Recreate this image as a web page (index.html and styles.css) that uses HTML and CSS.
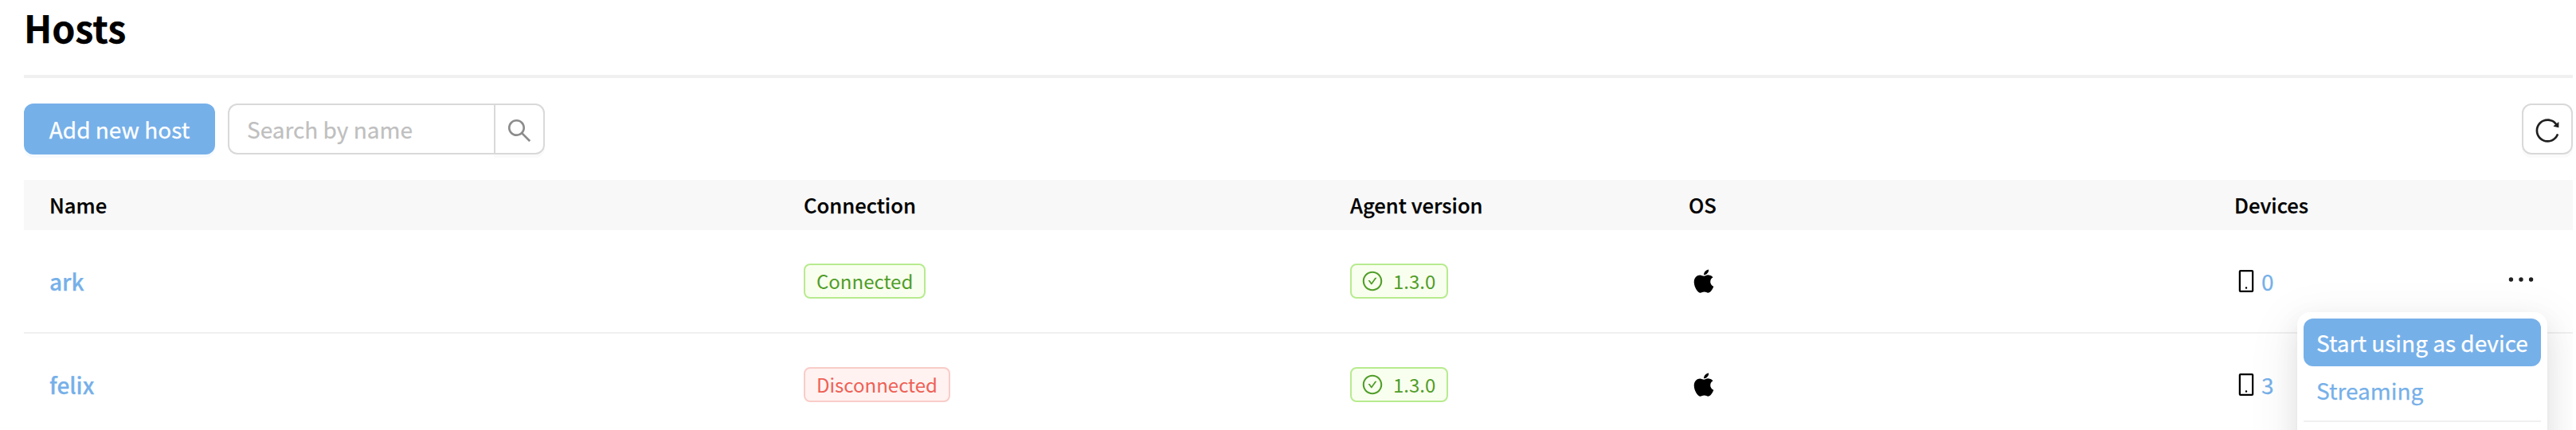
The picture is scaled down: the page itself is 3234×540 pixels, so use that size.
FILE: index.html
```
<!DOCTYPE html>
<html lang="en">
<head>
<meta charset="utf-8">
<title>Hosts</title>
<link rel="stylesheet" href="styles.css">
</head>
<body>
<svg class="sprite" aria-hidden="true">
  <symbol id="search" viewBox="0 0 1024 1024"><path d="M909.6 854.5L649.9 594.8C690.2 542.7 712 479 712 412c0-80.2-31.3-155.4-87.9-212.1-56.6-56.7-132-87.9-212.1-87.9s-155.5 31.3-212.1 87.9C143.2 256.5 112 331.8 112 412c0 80.1 31.3 155.5 87.9 212.1C256.5 680.8 331.8 712 412 712c67 0 130.6-21.8 182.7-62l259.7 259.6a8.2 8.2 0 0011.6 0l43.6-43.5a8.2 8.2 0 000-11.6zM570.4 570.4C528 612.7 471.8 636 412 636s-116-23.3-158.4-65.6C211.3 528 188 471.8 188 412s23.3-116.1 65.6-158.4C296 211.3 352.2 188 412 188s116.1 23.2 158.4 65.6S636 352.2 636 412s-23.3 116.1-65.6 158.4z"/></symbol>
  <symbol id="reload" viewBox="0 0 1024 1024"><path d="M909.1 209.3l-56.4 44.1C775.8 155.1 656.2 92 521.9 92 290 92 102.3 279.5 102 511.5 101.7 743.7 289.8 932 521.9 932c181.3 0 335.8-115 394.6-276.1 1.5-4.2-.7-8.9-4.9-10.3l-56.7-19.5a8 8 0 00-10.1 4.8c-1.8 5-3.8 10-5.9 14.9-17.3 41-42.1 77.8-73.7 109.4A344.77 344.77 0 01655.9 829c-42.3 17.9-87.4 27-133.8 27-46.5 0-91.5-9.1-133.8-27A341.5 341.5 0 01279 755.2a342.16 342.16 0 01-73.7-109.4c-17.9-42.4-27-87.4-27-133.9s9.1-91.5 27-133.9c17.3-41 42.1-77.8 73.7-109.4 31.6-31.6 68.4-56.4 109.3-73.8 42.3-17.9 87.4-27 133.8-27 46.5 0 91.5 9.1 133.8 27a341.5 341.5 0 01109.3 73.8c9.9 9.9 19.2 20.4 27.8 31.4l-60.2 47a8 8 0 003 14.1l175.6 43c5 1.2 9.9-2.6 9.9-7.7l.8-180.9c-.1-6.6-7.8-10.3-13-6.2z"/></symbol>
  <symbol id="check" viewBox="0 0 1024 1024"><path d="M699 353h-46.9c-10.2 0-19.9 4.9-25.9 13.3L469 584.3l-71.2-98.8c-6-8.3-15.6-13.3-25.9-13.3H325c-6.5 0-10.3 7.4-6.5 12.7l124.6 172.8a31.8 31.8 0 0051.7 0l210.6-292c3.9-5.3.1-12.7-6.4-12.7z"/><path d="M512 64C264.6 64 64 264.6 64 512s200.6 448 448 448 448-200.6 448-448S759.4 64 512 64zm0 820c-205.4 0-372-166.6-372-372s166.6-372 372-372 372 166.6 372 372-166.6 372-372 372z"/></symbol>
  <symbol id="apple" viewBox="0 0 1024 1024"><path d="M747.4 535.7c-.4-68.2 30.5-119.6 92.9-157.5-34.9-50-87.7-77.5-157.3-82.8-65.9-5.2-138 38.4-164.4 38.4-27.9 0-91.7-36.6-141.9-36.6C273.1 298.8 163 379.8 163 544.6c0 48.7 8.9 99 26.7 150.8 23.8 68.2 109.6 235.3 199.1 232.6 46.8-1.1 79.9-33.2 140.8-33.2 59.1 0 89.7 33.2 141.9 33.2 90.3-1.3 167.9-153.2 190.5-221.6-121.1-57.1-114.6-167.2-114.6-170.7zm-105.1-305c50.7-60.2 46.1-115 44.6-134.7-44.8 2.6-96.6 30.5-126.1 64.8-32.5 36.8-51.6 82.3-47.5 133.6 48.4 3.7 92.6-21.2 129-63.7z"/></symbol>
  <symbol id="mobile" viewBox="0 0 1024 1024"><path d="M744 62H280c-35.3 0-64 28.7-64 64v768c0 35.3 28.7 64 64 64h464c35.3 0 64-28.7 64-64V126c0-35.3-28.7-64-64-64zm-8 824H288V134h448v752zM472 784a40 40 0 1080 0 40 40 0 10-80 0z"/></symbol>
  <symbol id="more" viewBox="0 0 1024 1024"><circle cx="232" cy="511" r="60"/><circle cx="512" cy="511" r="60"/><circle cx="792" cy="511" r="60"/></symbol>
</svg>
<main class="page">
  <h1 class="title">Hosts</h1>
  <div class="toolbar">
    <button class="btn primary">Add new host</button>
    <div class="search">
      <input class="search-input" placeholder="Search by name">
      <button class="search-btn" aria-label="Search"><svg class="icon i36"><use href="#search"/></svg></button>
    </div>
    <button class="refresh" aria-label="Refresh"><svg class="icon i36"><use href="#reload"/></svg></button>
  </div>
  <div class="table">
    <div class="row head"><div>Name</div><div>Connection</div><div>Agent version</div><div class="os">OS</div><div>Devices</div></div>
    <div class="row">
      <div><a class="name">ark</a></div>
      <div><span class="tag ok">Connected</span></div>
      <div><span class="tag ok version"><svg class="icon i28"><use href="#check"/></svg>1.3.0</span></div>
      <div><svg class="icon i36"><use href="#apple"/></svg></div>
      <div class="devices"><svg class="icon i32"><use href="#mobile"/></svg><a class="count">0</a>
        <div class="actions"><svg class="icon more"><use href="#more"/></svg>
          <div class="menu">
            <div class="item active">Start using as device</div>
            <div class="item">Streaming</div>
            <div class="divider"></div>
          </div>
        </div>
      </div>
    </div>
    <div class="row">
      <div><a class="name">felix</a></div>
      <div><span class="tag err">Disconnected</span></div>
      <div><span class="tag ok version"><svg class="icon i28"><use href="#check"/></svg>1.3.0</span></div>
      <div><svg class="icon i36"><use href="#apple"/></svg></div>
      <div class="devices"><svg class="icon i32"><use href="#mobile"/></svg><a class="count">3</a></div>
    </div>
  </div>
</main>
</body>
</html>
```
FILE: styles.css
```
* { box-sizing: border-box; }
html { overflow: hidden; }
body { margin: 0; height: 540px; overflow: hidden; background: #fff; color: #000; font: 28px/44px "Noto Sans CJK JP", sans-serif; -webkit-text-stroke: .25px; }
button, input { font: inherit; margin: 0; padding: 0; background: none; border: 0; }
.sprite { display: none; }
.icon { display: block; flex: none; fill: currentColor; }
.i28 { width: 28px; height: 28px; }
.i32 { width: 32px; height: 32px; }
.i36 { width: 36px; height: 36px; }
.page { height: 540px; margin: 0 4px 0 30px; overflow: hidden; }
.title { margin: 0; height: 98px; border-bottom: 4px solid #f0f0f0; font-size: 46.6px; font-weight: 700; line-height: 68px; }
.toolbar { display: flex; height: 128px; padding: 32px 0; }
.primary { width: 240px; height: 64px; margin-right: 16px; border-radius: 12px; background: #76b0e9; color: #fff; box-shadow: 0 4px 0 #f5faff; }
.search { display: flex; width: 398px; height: 64px; }
.search-input { width: 334px; padding: 0 22px; border: 2px solid #d9d9d9; border-right: 0; border-radius: 12px 0 0 12px; outline: 0; }
.search-input::placeholder { color: #bfbfbf; opacity: 1; }
.search-btn { display: flex; align-items: center; justify-content: center; flex: 1; padding-top: 4px; border: 2px solid #d9d9d9; border-radius: 0 12px 12px 0; color: #8c8c8c; box-shadow: 0 4px 0 #fafafa; }
.refresh { display: flex; align-items: center; justify-content: center; width: 64px; height: 64px; margin-left: auto; padding-top: 4px; border: 2px solid #d9d9d9; border-radius: 12px; color: #1f1f1f; box-shadow: 0 4px 0 #fafafa; }
.row { display: grid; grid-template-columns: 947px 686px 426px 684px 457px; align-items: center; height: 130px; border-bottom: 2px solid #f0f0f0; }
.row > div { display: flex; align-items: center; padding-left: 32px; }
.head { height: 63px; padding-bottom: 2px; border: 0; background: #f8f8f8; font-size: 25.6px; font-weight: 500; }
.head > .os { padding-left: 31px; }
.name { padding-bottom: 1px; color: #76b0e9; font-weight: 500; }
.tag { display: inline-flex; align-items: center; gap: 12px; height: 44px; padding: 0 14px; border: 2px solid; border-radius: 8px; font-size: 24px; line-height: 38px; -webkit-text-stroke: 0; }
.version { padding-left: 12px; }
.ok { border-color: #b7eb8f; background: #f9ffef; color: #4f9d28; }
.err { border-color: #f9ccc8; background: #fff2f0; color: #ee6055; }
.devices .i32 { margin-left: -1px; }
.count { margin-left: 3px; color: #76b0e9; }
.actions { position: relative; display: flex; margin-left: auto; padding-right: 42px; }
.more { width: 46px; height: 46px; margin-bottom: 4px; color: #1f1f1f; }
.menu { position: absolute; top: 64px; right: 32px; width: 314px; height: 200px; padding: 8px; border-radius: 16px; background: #fff; box-shadow: 0 12px 32px rgba(0,0,0,.08), 0 6px 12px -8px rgba(0,0,0,.12), 0 18px 56px 16px rgba(0,0,0,.05); }
.item { height: 60px; padding: 0 16px; border-radius: 12px; color: #76b0e9; line-height: 60px; white-space: nowrap; }
.active { background: #76b0e9; color: #fff; }
.divider { height: 2px; margin-top: 8px; background: #f0f0f0; }
```
